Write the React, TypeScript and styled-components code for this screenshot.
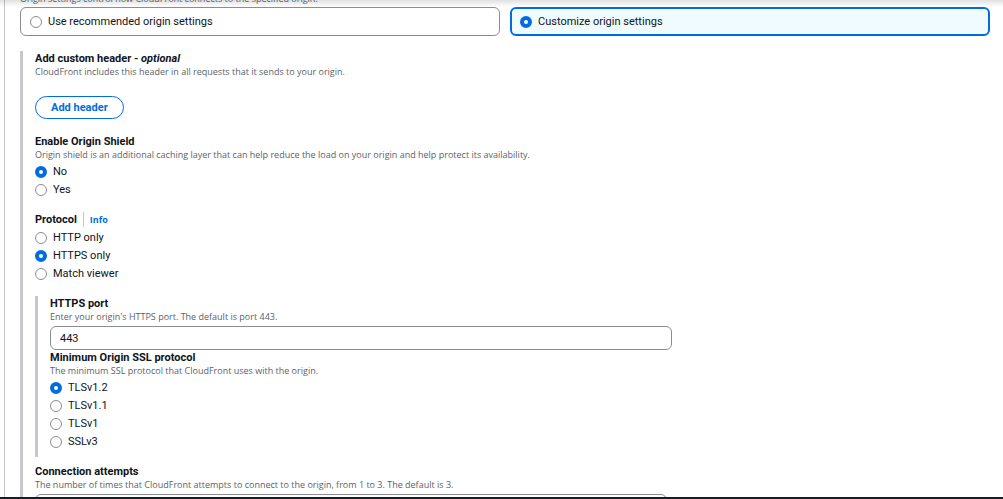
import React, { useId, useState } from "react";
import styled, { createGlobalStyle, css } from "styled-components";

const GlobalStyle = createGlobalStyle`
  *, *::before, *::after { box-sizing: border-box; }
  body {
    margin: 0;
    background: #fff;
    color: #0f141a;
    font-family: Roboto, "Noto Sans", sans-serif;
    font-size: 11px;
    line-height: 14px;
  }
`;

const Shell = styled.div`
  display: flex;
  flex-direction: column;
  height: 100vh;
`;

const StickyShadow = styled.div`
  position: absolute;
  top: 0;
  left: 0;
  right: 0;
  height: 7px;
  background: linear-gradient(rgba(0, 7, 22, 0.12), rgba(0, 7, 22, 0));
  pointer-events: none;
`;

const Viewport = styled.main`
  flex: 1;
  min-height: 0;
  overflow: hidden;
  margin-left: 4px;
  padding: 0 13px 0 15px;
  border-left: 1px solid #c6c6cd;
`;

const Footer = styled.footer`
  flex: none;
  height: 2px;
  background: #161d26;
`;

const ScrolledLine = styled.div`
  display: flex;
  align-items: flex-end;
  height: 7px;
  padding-bottom: 2px;
  overflow: hidden;
`;

const Description = styled.p`
  margin: 0;
  font-family: "Open Sans", "Noto Sans", sans-serif;
  font-size: 9px;
  line-height: 12px;
  color: #5c5f69;
`;

const Tiles = styled.div`
  display: grid;
  grid-template-columns: 1fr 1fr;
  gap: 10px;
  margin-bottom: 15px;
`;

const Tile = styled.label<{ $selected: boolean }>`
  display: flex;
  align-items: center;
  gap: 6px;
  height: 29px;
  border-radius: 6px;
  cursor: pointer;
  ${({ $selected }) =>
    $selected
      ? css`
          padding: 0 8px;
          border: 2px solid #006ce0;
          background: #f0fbff;
        `
      : css`
          padding: 0 9px;
          border: 1px solid #8c8c94;
          background: #fff;
        `}
`;

const Radio = styled.input.attrs({ type: "radio" })`
  appearance: none;
  flex: none;
  width: 12px;
  height: 12px;
  margin: 0;
  border: 1px solid #8c8c94;
  border-radius: 50%;
  background: #fff;
  &:checked {
    border: 4px solid #006ce0;
  }
`;

const Indented = styled.section`
  display: flex;
  flex-direction: column;
  gap: 15px;
  padding-left: 12px;
  border-left: 3px solid #c6c6cd;
`;

const Nested = styled(Indented)`
  gap: 0;
  padding-bottom: 8px;
`;

const NestedWithNext = styled.div`
  display: flex;
  flex-direction: column;
  gap: 7px;
`;

const titleText = css`
  font-weight: 700;
  line-height: 15px;
`;

const Title = styled.div`
  ${titleText}
`;

const TitleLabel = styled.label`
  display: block;
  ${titleText}
`;

const TitleRow = styled.div`
  display: flex;
  align-items: center;
`;

const InfoLink = styled.a`
  margin-left: 6px;
  padding-left: 6px;
  border-left: 1px solid #c6c6cd;
  font-family: "Open Sans", "Noto Sans", sans-serif;
  font-size: 9px;
  line-height: 15px;
  font-weight: 700;
  color: #006ce0;
  text-decoration: none;
`;

const AddButton = styled.button`
  height: 23px;
  margin-top: 18px;
  padding: 0 15px;
  border: 1px solid #006ce0;
  border-radius: 12px;
  background: #fff;
  color: #006ce0;
  font: inherit;
  font-weight: 700;
  cursor: pointer;
`;

const Options = styled.div`
  display: flex;
  flex-direction: column;
  align-items: flex-start;
  gap: 4px;
  padding-top: 4px;
`;

const Option = styled.label`
  display: flex;
  align-items: center;
  gap: 6px;
  cursor: pointer;
`;

const FieldGrid = styled.div`
  display: grid;
  grid-template-columns: 2fr 1fr;
  gap: 7px;
  padding-top: 3px;
`;

const TextInput = styled.input`
  width: 100%;
  height: 24px;
  padding: 0 9px;
  border: 1px solid #8c8c94;
  border-radius: 6px;
  background: #fff;
  color: inherit;
  font: inherit;
`;

type RadioFieldProps = {
  title: string;
  description?: string;
  info?: boolean;
  options: string[];
  initial: string;
};

function RadioField({ title, description, info, options, initial }: RadioFieldProps) {
  const id = useId();
  const [value, setValue] = useState(initial);
  return (
    <div role="radiogroup" aria-labelledby={id}>
      <TitleRow>
        <Title id={id}>{title}</Title>
        {info && <InfoLink href="#info">Info</InfoLink>}
      </TitleRow>
      {description && <Description>{description}</Description>}
      <Options>
        {options.map((option) => (
          <Option key={option}>
            <Radio name={id} checked={value === option} onChange={() => setValue(option)} />
            {option}
          </Option>
        ))}
      </Options>
    </div>
  );
}

type TextFieldProps = { title: string; description: string; initial: string };

function TextField({ title, description, initial }: TextFieldProps) {
  const id = useId();
  return (
    <div>
      <TitleLabel htmlFor={id}>{title}</TitleLabel>
      <Description>{description}</Description>
      <FieldGrid>
        <TextInput id={id} defaultValue={initial} />
      </FieldGrid>
    </div>
  );
}

const tiles = ["Use recommended origin settings", "Customize origin settings"];

export default function App() {
  const [tile, setTile] = useState(tiles[1]);
  return (
    <Shell>
      <GlobalStyle />
      <Viewport>
        <ScrolledLine>
          <Description>
            Origin settings control how CloudFront connects to the specified origin.
          </Description>
        </ScrolledLine>
        <Tiles role="radiogroup" aria-label="Origin settings">
          {tiles.map((name) => (
            <Tile key={name} $selected={tile === name}>
              <Radio name="origin-settings" checked={tile === name} onChange={() => setTile(name)} />
              {name}
            </Tile>
          ))}
        </Tiles>
        <Indented>
          <div>
            <Title>
              Add custom header - <em>optional</em>
            </Title>
            <Description>
              CloudFront includes this header in all requests that it sends to your origin.
            </Description>
            <AddButton type="button">Add header</AddButton>
          </div>
          <RadioField
            title="Enable Origin Shield"
            description="Origin shield is an additional caching layer that can help reduce the load on your origin and help protect its availability."
            options={["No", "Yes"]}
            initial="No"
          />
          <RadioField
            title="Protocol"
            info
            options={["HTTP only", "HTTPS only", "Match viewer"]}
            initial="HTTPS only"
          />
          <NestedWithNext>
            <Nested>
              <TextField
                title="HTTPS port"
                description="Enter your origin's HTTPS port. The default is port 443."
                initial="443"
              />
              <RadioField
                title="Minimum Origin SSL protocol"
                description="The minimum SSL protocol that CloudFront uses with the origin."
                options={["TLSv1.2", "TLSv1.1", "TLSv1", "SSLv3"]}
                initial="TLSv1.2"
              />
            </Nested>
            <TextField
              title="Connection attempts"
              description="The number of times that CloudFront attempts to connect to the origin, from 1 to 3. The default is 3."
              initial="3"
            />
          </NestedWithNext>
        </Indented>
      </Viewport>
      <StickyShadow />
      <Footer />
    </Shell>
  );
}
